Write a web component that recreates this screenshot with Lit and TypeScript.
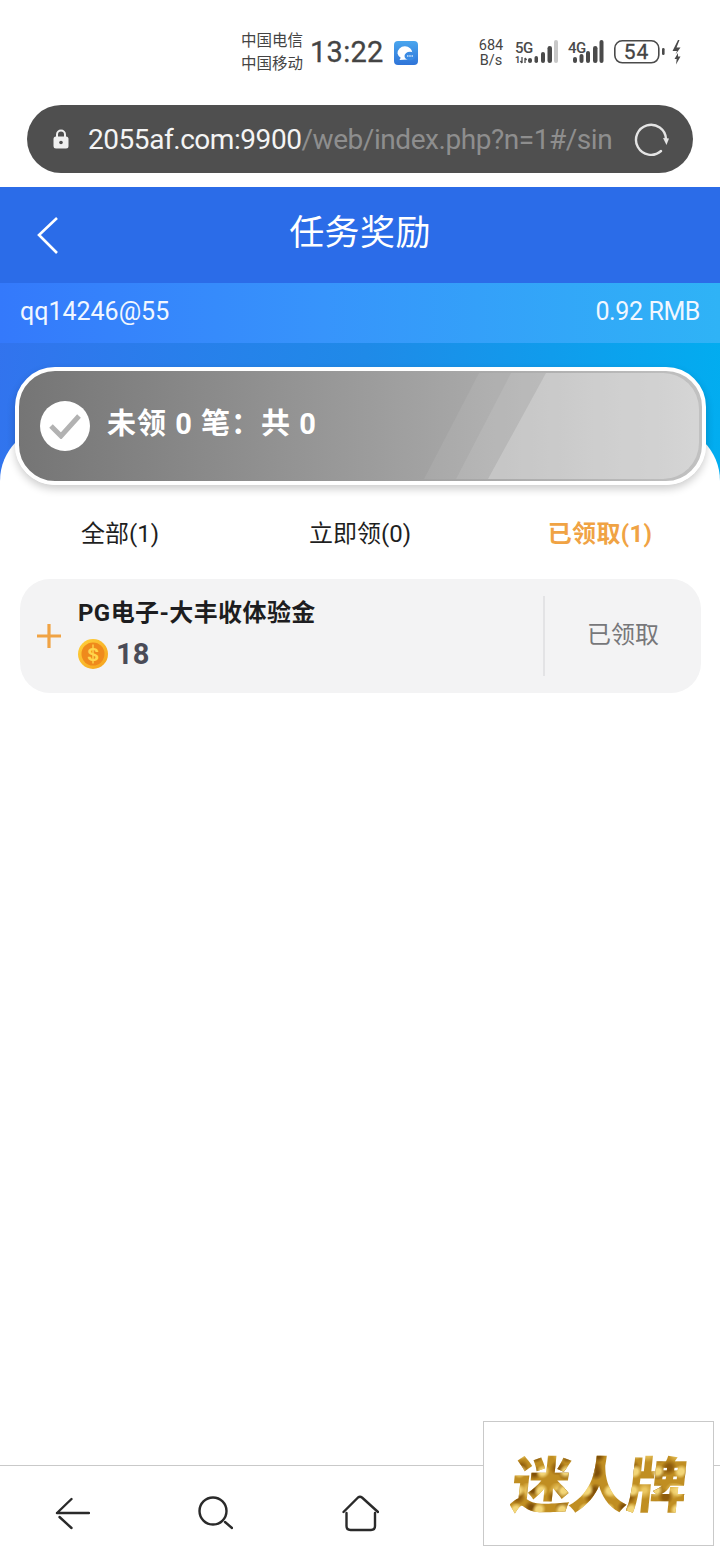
import { LitElement, html, css, svg } from "lit";
import { customElement, state } from "lit/decorators.js";

const FONT = `"Roboto", "Noto Sans CJK SC", sans-serif`;
const INK = "#4a4a4a";

// x, width, height of each signal bar, all standing on y = 27
const BARS_5G = [
  [18, 4, 5],
  [24.5, 3.5, 7],
  [31, 4, 11],
  [37.5, 4.5, 17],
  [44, 4, 23],
];
const BARS_4G = [
  [63, 4, 6],
  [69.5, 4, 9],
  [76, 4, 12],
  [83, 4.5, 17],
  [89.5, 4, 23],
];

@customElement("app-root")
export class AppRoot extends LitElement {
  @state() tabs = [
    { label: "全部(1)", active: false },
    { label: "立即领(0)", active: false },
    { label: "已领取(1)", active: true },
  ];

  static styles = css`
    :host {
      display: flex;
      flex-direction: column;
      position: relative;
      width: 720px;
      height: 1560px;
      overflow: hidden;
      background: #fff;
      font-family: "Roboto", "Noto Sans CJK SC", sans-serif;
      color: #1b1b1d;
    }

    /* system status row */
    .status {
      height: 105px;
      box-sizing: border-box;
      padding: 31px 0 0 241px;
      display: flex;
      align-items: flex-start;
      color: #444;
    }
    .carrier {
      width: 66px;
      font-size: 15.5px;
      line-height: 23px;
      white-space: nowrap;
      margin-top: -1px;
    }
    .clock {
      width: 84px;
      font-size: 29px;
      line-height: 42px;
      letter-spacing: 0.3px;
      margin: 0 0 0 3px;
      -webkit-text-stroke: 0.3px #444;
    }
    .chat {
      width: 24px;
      height: 24px;
      margin: 10px 0 0 0;
    }
    .speed {
      width: 30px;
      margin: 7px 0 0 58px;
      font-size: 14.5px;
      line-height: 15px;
      text-align: center;
    }
    .signals {
      margin: 5px 0 0 4px;
      display: block;
    }

    /* address bar */
    .url-wrap {
      padding: 0 27px 14px;
    }
    .url {
      height: 68px;
      border-radius: 34px;
      background: #4f4f4f;
      display: flex;
      align-items: center;
      padding: 0 23px 0 25px;
      color: #8e8e8e;
      font-size: 28px;
      letter-spacing: -0.45px;
    }
    .url svg.lock {
      flex: none;
      margin-right: 18px;
    }
    .url .addr {
      width: 524px;
      overflow: hidden;
      white-space: nowrap;
    }
    .url .addr b {
      color: #f4f4f4;
      font-weight: 400;
    }
    .url svg.reload {
      margin-left: auto;
      flex: none;
    }

    /* page header */
    .head {
      height: 96px;
      background: #2b6ce8;
      display: flex;
      align-items: center;
      justify-content: center;
      position: relative;
      color: #fff;
      font-size: 35px;
      letter-spacing: 0.4px;
      padding-bottom: 12px;
      box-sizing: border-box;
    }
    .back {
      position: absolute;
      left: 36px;
      top: 29px;
    }
    .hero {
      height: 222px;
      background: linear-gradient(97deg, #3273ee 0%, #1f8ae8 50%, #01aef0 100%);
    }
    .account {
      height: 60px;
      box-sizing: border-box;
      padding: 0 20px 4px;
      display: flex;
      align-items: center;
      justify-content: space-between;
      color: #f1f7ff;
      font-size: 25px;
      background: linear-gradient(90deg, #3479fb 0%, #3794fb 45%, #2fb3f6 100%);
    }
    .account .money {
      letter-spacing: -0.4px;
    }

    /* white sheet sitting under the summary card */
    .sheet {
      position: relative;
      flex: 1;
      margin-top: -65px;
      display: flex;
      flex-direction: column;
    }
    .sheet::before {
      content: "";
      position: absolute;
      left: 0;
      right: 0;
      top: -15px;
      height: 80px;
      background: #fff;
      border-radius: 56px 56px 0 0;
    }
    .summary {
      position: relative;
      margin: -73px 14px 0 15px;
      height: 118px;
      box-sizing: border-box;
      border: 4px solid #fff;
      border-radius: 40px;
      background: linear-gradient(90deg, #757575 0%, #c1c1c1 100%);
      box-shadow: 0 4px 8px rgba(0, 0, 0, 0.2);
      display: flex;
      align-items: center;
      padding-left: 21px;
      overflow: hidden;
      color: #fff;
      font-size: 29px;
      font-weight: 700;
    }
    .summary .stripes {
      position: absolute;
      right: 3px;
      top: 2px;
      border-radius: 0 36px 36px 0;
    }
    .summary .tick {
      position: relative;
      width: 50px;
      height: 50px;
      border-radius: 50%;
      background: #fff;
      display: flex;
      align-items: center;
      justify-content: center;
      margin-right: 17px;
      flex: none;
    }
    .summary .txt {
      position: relative;
      letter-spacing: 1px;
      padding-bottom: 10px;
    }

    .tabs {
      position: relative;
      display: grid;
      grid-template-columns: 240px 240px 240px;
      height: 94px;
      box-sizing: border-box;
      padding-bottom: 2px;
      align-items: center;
      font-size: 24px;
    }
    .tab {
      text-align: center;
      color: #1f1f1f;
    }
    .tab.on {
      color: #f0a344;
      font-weight: 700;
      letter-spacing: 0.3px;
    }

    /* reward row */
    .item {
      position: relative;
      margin: 0 19px 0 20px;
      height: 114px;
      border-radius: 30px;
      background: #f3f3f4;
      display: flex;
      align-items: center;
      box-sizing: border-box;
      padding-left: 16px;
    }
    .plus {
      flex: none;
      margin-right: 16px;
    }
    .info {
      flex: 1;
      padding-bottom: 5px;
    }
    .name {
      font-size: 24px;
      font-weight: 700;
      line-height: 32px;
      letter-spacing: 0.4px;
      color: #1d1d20;
    }
    .amount {
      display: flex;
      align-items: center;
      margin-top: 9px;
      font-size: 29px;
      font-weight: 700;
      color: #4a4b57;
      line-height: 32px;
    }
    .amount svg {
      margin-right: 8px;
    }
    .state {
      width: 158px;
      height: 80px;
      border-left: 2px solid #e3e3e5;
      display: flex;
      align-items: center;
      justify-content: center;
      font-size: 24px;
      color: #77777a;
      box-sizing: border-box;
      padding-bottom: 7px;
    }

    .spacer {
      flex: 1;
    }

    /* browser toolbar */
    .toolbar {
      height: 95px;
      border-top: 1px solid #c9c9c9;
      box-sizing: border-box;
      display: grid;
      grid-template-columns: 143px 145px 37px;
      padding: 29px 0 0 54px;
    }
    .toolbar svg {
      fill: none;
      stroke: #2a2a2a;
      stroke-width: 2.4;
      stroke-linecap: round;
      stroke-linejoin: round;
    }

    /* floating ad box */
    .badge {
      position: absolute;
      left: 483px;
      top: 1421px;
      width: 231px;
      height: 125px;
      box-sizing: border-box;
      border: 1px solid #c9c9c9;
      background: #fff;
      display: flex;
      align-items: center;
      justify-content: center;
      padding-bottom: 6px;
    }
    .badge span {
      font-family: "Noto Sans CJK SC", sans-serif;
      font-weight: 900;
      font-size: 60px;
      line-height: 70px;
      letter-spacing: -2px;
      transform: skewX(-6deg);
      background-color: #c08e22;
      background-image: radial-gradient(circle at 30% 35%, #f3d678 0 3px, transparent 7px),
        radial-gradient(circle at 70% 60%, #7f4f08 0 2px, transparent 7px),
        radial-gradient(circle at 20% 75%, #8f5c0c 0 3px, transparent 8px),
        radial-gradient(circle at 60% 20%, #ecc862 0 2px, transparent 9px);
      background-size: 23px 19px, 31px 17px, 37px 29px, 29px 37px;
      -webkit-background-clip: text;
      background-clip: text;
      color: transparent;
    }
  `;

  private renderBars(bars: number[][], dimLast: boolean) {
    return bars.map(
      ([x, w, h], i) => svg`<rect x=${x} y=${27 - h} width=${w} height=${h} rx=${w / 2}
        fill=${dimLast && i === bars.length - 1 ? "#c8c8c8" : INK} />`
    );
  }

  private renderStatusIcons() {
    return html`<svg class="signals" width="180" height="32" viewBox="0 0 180 32">
      <text x="5" y="16.5" font-size="15" font-weight="500" letter-spacing="-0.5" fill=${INK} font-family=${FONT}>5G</text>
      <text x="5" y="27" font-size="9" font-weight="700" fill=${INK} font-family=${FONT}>1</text>
      <path d="M12 21v6M12 27l-1.6-2M15 27v-5M15 22l1.6 2" stroke=${INK} stroke-width="1.3" fill="none" />
      ${this.renderBars(BARS_5G, true)}
      <text x="58" y="16.5" font-size="15" font-weight="500" letter-spacing="-0.5" fill=${INK} font-family=${FONT}>4G</text>
      ${this.renderBars(BARS_4G, false)}
      <rect x="104.8" y="4.8" width="44" height="22" rx="7.5" fill="none" stroke=${INK} stroke-width="1.6" />
      <text x="126.5" y="23" font-size="21" letter-spacing="1" fill="#444" stroke="#444" stroke-width=".3" text-anchor="middle" font-family=${FONT}>54</text>
      <rect x="152" y="12" width="2.6" height="7" rx="1.2" fill=${INK} />
      <path d="M168 4l-5.500 11h4.500l-1.500 3.500 5-7h-4l3-7.500zM168 17l-3.500 6h2.200l-.7 5.500 4.500-8h-2.500z" fill=${INK} />
    </svg>`;
  }

  render() {
    return html`
      <div class="status">
        <div class="carrier">中国电信<br />中国移动</div>
        <div class="clock">13:22</div>
        <svg class="chat" viewBox="0 0 24 24">
          <defs>
            <linearGradient id="cg" x1="0" y1="0" x2="0" y2="1">
              <stop offset="0" stop-color="#4aa6ee" />
              <stop offset="1" stop-color="#2f74d8" />
            </linearGradient>
          </defs>
          <rect width="24" height="24" rx="4" fill="url(#cg)" />
          <path d="M3.500 12.500a7.500 7 0 0 1 15 -.5l-5 6.500-8 .5 1.200-2.300a7 7 0 0 1-3.200-4.200z" fill="#fff" />
          <ellipse cx="16" cy="15" rx="5.500" ry="4.300" fill="#3a8be4" />
          <circle cx="13.800" cy="15" r=".8" fill="#fff" />
          <circle cx="16" cy="15" r=".8" fill="#fff" />
          <circle cx="18.200" cy="15" r=".8" fill="#fff" />
        </svg>
        <div class="speed">684<br />B/s</div>
        ${this.renderStatusIcons()}
      </div>

      <div class="url-wrap">
        <div class="url">
          <svg class="lock" width="18" height="22" viewBox="0 0 18 22">
            <path d="M5 9V6.500a4 4 0 0 1 8 0V9" fill="none" stroke="#f0f0f0" stroke-width="2" />
            <rect x="1.500" y="8.500" width="15" height="12" rx="2.500" fill="#f0f0f0" />
            <circle cx="9" cy="14.500" r="1.800" fill="#4f4f4f" />
          </svg>
          <div class="addr"><b>2055af.com:9900</b>/web/index.php?n=1#/sin</div>
          <svg class="reload" width="36" height="36" viewBox="0 0 36 36">
            <path d="M32 18A15 15 0 1 0 27 30" fill="none" stroke="#e4e4e4" stroke-width="2.400" stroke-linecap="round" />
            <path d="M29 17l6 .5-2.500 6.500z" fill="#e4e4e4" />
          </svg>
        </div>
      </div>

      <div class="head">
        <svg class="back" width="24" height="40" viewBox="0 0 24 40">
          <path d="M21 2L3 19l18 18" fill="none" stroke="#fff" stroke-width="2.600" />
        </svg>
        任务奖励
      </div>

      <div class="hero">
        <div class="account"><span>qq14246@55</span><span class="money">0.92 RMB</span></div>
      </div>

      <div class="sheet">
        <div class="summary">
          <svg class="stripes" width="280" height="106" viewBox="0 0 280 106">
            <path d="M5 106L60 0h220v106z" fill="#fff" fill-opacity=".07" />
            <path d="M37 106L92 0h188v106z" fill="#fff" fill-opacity=".09" />
            <path d="M69 106L127 0h153v106z" fill="#fff" fill-opacity=".22" />
          </svg>
          <div class="tick">
            <svg width="34" height="26" viewBox="0 0 34 26">
              <path d="M3 13l10 10L31 3" fill="none" stroke="#b2b2b2" stroke-width="5" />
            </svg>
          </div>
          <div class="txt">未领 0 笔：共 0</div>
        </div>

        <div class="tabs">
          ${this.tabs.map(
            (t) => html`<div class="tab ${t.active ? "on" : ""}">${t.label}</div>`
          )}
        </div>

        <div class="item">
          <svg class="plus" width="26" height="26" viewBox="0 0 26 26">
            <path d="M13 1v24M1 13h24" stroke="#f0a344" stroke-width="3.200" fill="none" />
          </svg>
          <div class="info">
            <div class="name">PG电子-大丰收体验金</div>
            <div class="amount">
              <svg width="30" height="30" viewBox="0 0 30 30">
                <defs>
                  <linearGradient id="coin" x1="0" y1="0" x2="1" y2="1">
                    <stop offset="0" stop-color="#ffd23c" />
                    <stop offset="1" stop-color="#f5a01c" />
                  </linearGradient>
                </defs>
                <circle cx="15" cy="15" r="15" fill="url(#coin)" />
                <circle cx="15" cy="15" r="11.500" fill="#ef8a1c" />
                <text x="15" y="21.500" font-size="19" font-weight="700" fill="#ffd64c" text-anchor="middle" font-family=${FONT}>S</text>
                <path d="M15 5.500v19" stroke="#ffd64c" stroke-width="1.400" />
              </svg>
              18
            </div>
          </div>
          <div class="state">已领取</div>
        </div>

        <div class="spacer"></div>

        <div class="toolbar">
          <svg width="36" height="36" viewBox="0 0 36 36">
            <path d="M3 18H35M17.500 4L3 18M5.500 22L17.500 33" />
          </svg>
          <svg width="36" height="36" viewBox="0 0 36 36">
            <circle cx="16" cy="16" r="13.500" />
            <path d="M28 27l7 6" />
          </svg>
          <svg width="37" height="37" viewBox="0 0 37 37">
            <path d="M1.500 17L16 2.500q2-1.500 4 0L36 17M4.500 18V31q0 4 4 4H29q4 0 4-4V18" />
          </svg>
        </div>
      </div>

      <div class="badge"><span>迷人牌</span></div>
    `;
  }
}
